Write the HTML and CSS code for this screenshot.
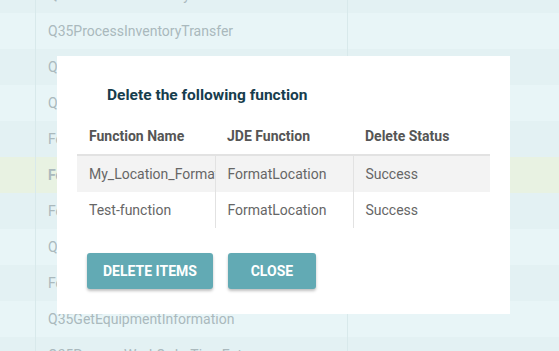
FILE: index.html
```html
<!DOCTYPE html>
<html lang="en">
<head>
  <meta charset="UTF-8" />
  <title>Functions</title>
  <link rel="stylesheet" href="styles.css">
</head>
<body>

  <div class="list">
    <div class="row dark"><span class="c1"></span><span class="c2">Q35GetItemAvailability</span><span class="c3"></span></div>
    <div class="row"><span class="c1"></span><span class="c2">Q35ProcessInventoryTransfer</span><span class="c3"></span></div>
    <div class="row dark"><span class="c1"></span><span class="c2">Q35GetItemLocations</span><span class="c3"></span></div>
    <div class="row"><span class="c1"></span><span class="c2">Q35GetWorkOrderList</span><span class="c3"></span></div>
    <div class="row dark"><span class="c1"></span><span class="c2">FormatDate</span><span class="c3"></span></div>
    <div class="row selected"><span class="c1"></span><span class="c2 bold">FormatLocation</span><span class="c3"></span></div>
    <div class="row dark"><span class="c1"></span><span class="c2">FormatItemNumber</span><span class="c3"></span></div>
    <div class="row"><span class="c1"></span><span class="c2">Q35GetBranchPlants</span><span class="c3"></span></div>
    <div class="row dark"><span class="c1"></span><span class="c2">FormatQuantity</span><span class="c3"></span></div>
    <div class="row"><span class="c1"></span><span class="c2">Q35GetEquipmentInformation</span><span class="c3"></span></div>
    <div class="row dark"><span class="c1"></span><span class="c2">Q35ProcessWorkOrderTimeEntry</span><span class="c3"></span></div>
  </div>

  <div class="modal">
    <h2 class="modal-title">Delete the following function</h2>
    <table class="result">
      <thead>
        <tr><th class="w1">Function Name</th><th class="w2">JDE Function</th><th>Delete Status</th></tr>
      </thead>
      <tbody>
        <tr class="odd"><td>My_Location_Format</td><td>FormatLocation</td><td>Success</td></tr>
        <tr><td>Test-function</td><td>FormatLocation</td><td>Success</td></tr>
      </tbody>
    </table>
    <div class="actions">
      <button class="btn">Delete Items</button>
      <button class="btn">Close</button>
    </div>
  </div>

</body>
</html>
```

FILE: styles.css
```css
body {
  margin: 0;
  font-family: Roboto, "Noto Sans", sans-serif;
  background: #e8f5f7;
  overflow: hidden;
}
.list {
  margin-top: -23px;
}
.row {
  display: flex;
  height: 36px;
  background: #e8f5f7;
  color: #aab9bd;
  font-size: 14px;
}
.row.dark {
  background: #e3f1f3;
}
.row.selected {
  background: #e8f2e2;
}
.row span {
  display: flex;
  align-items: center;
}
.c1 {
  width: 35px;
  border-right: 1px solid #d8e9eb;
}
.c2 {
  width: 299px;
  padding-left: 12px;
  border-right: 1px solid #d8e9eb;
  white-space: nowrap;
}
.c3 {
  flex: 1;
}
.bold {
  font-weight: bold;
}
.modal {
  position: absolute;
  left: 57px;
  top: 56px;
  width: 413px;
  padding: 24px 20px 25px;
  background: #fff;
}
.modal-title {
  margin: 0 0 7px 30px;
  font-size: 15.5px;
  line-height: 30px;
  font-weight: bold;
  color: #173d4d;
}
.result {
  width: 413px;
  border-collapse: collapse;
  table-layout: fixed;
  font-size: 14px;
}
.w1 {
  width: 114px;
}
.w2 {
  width: 114px;
}
.result th {
  height: 37px;
  padding: 0 12px;
  text-align: left;
  color: #555;
  font-weight: bold;
  white-space: nowrap;
  border-bottom: 2px solid #e2e2e2;
}
.result td {
  height: 36px;
  padding: 0 12px;
  color: #666;
  border-left: 1px solid #e2e2e2;
  white-space: nowrap;
  overflow: hidden;
}
.result td:first-child {
  border-left: none;
}
.result tr.odd td {
  background: #f3f3f3;
}
.actions {
  display: flex;
  gap: 15px;
  margin: 25px 0 0 10px;
}
.btn {
  min-width: 88px;
  height: 36px;
  padding: 0 16px;
  border: none;
  border-radius: 3px;
  background: #62aab4;
  color: #fff;
  font-family: Roboto, sans-serif;
  font-size: 14px;
  font-weight: bold;
  text-transform: uppercase;
  box-shadow: 0 2px 3px rgba(0,0,0,0.25);
  cursor: pointer;
}
```
